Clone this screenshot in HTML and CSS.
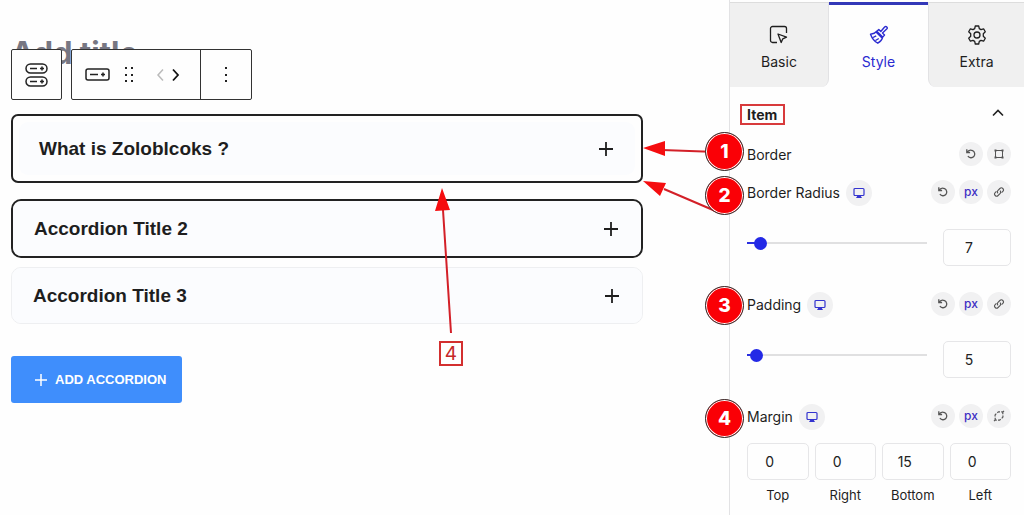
FILE: index.html
```html
<!DOCTYPE html>
<html lang="en">
<head>
<meta charset="utf-8">
<title>Accordion block editor</title>
<link rel="stylesheet" href="styles.css">
</head>
<body>
<svg class="sprite" aria-hidden="true">
  <symbol id="plus" viewBox="0 0 16 16"><path d="M8 1v14M1 8h14" fill="none" stroke="currentColor" stroke-width="1.800"/></symbol>
  <symbol id="reset" viewBox="0 0 12 12"><path d="M1.800 1.200v3.300h3.300M2 4.400c1.300-2 3.700-2.600 5.600-1.700a3.700 3.700 0 1 1-4.700 5.300" fill="none" stroke="currentColor" stroke-width="1.300"/></symbol>
  <symbol id="monitor" viewBox="0 0 12 12"><rect x="1" y="1.500" width="10" height="7" rx="1" fill="none" stroke="currentColor" stroke-width="1.200"/><path d="M4.500 8.500h3l1.500 2.500h-6z" fill="currentColor"/></symbol>
  <symbol id="link" viewBox="0 0 12 12"><path d="M5 7.300a2 2 0 0 1 0-2.900l1.900-1.900a2 2 0 0 1 2.900 2.900l-1.200 1.200M7 4.700a2 2 0 0 1 0 2.900l-1.900 1.900a2 2 0 0 1-2.900-2.900l1.200-1.200" fill="none" stroke="currentColor" stroke-width="1.100"/></symbol>
  <symbol id="unlink" viewBox="0 0 12 12"><path d="M4.300 2.700 5.500 1.800H7M8.200 1.800h1.600v2.400M9.900 5.600v1.500l-1.200 1.200M7.700 9.200 6.500 10.200H5M3.800 10.200H2.200V7.800M2.100 6.400V4.900l1.200-1.200M10 1.800l1-1M2 10.200l-1 1" fill="none" stroke="currentColor" stroke-width="1.200"/></symbol>
</svg>

<div class="app">
  <main class="editor">
    <header class="editor-head">
      <h1 class="post-title">Add title</h1>
      <div class="toolbar" role="toolbar" aria-label="Block tools">
        <div class="tool-group">
          <button class="tool tool-parent" aria-label="Select parent accordion">
            <svg width="24" height="26" viewBox="0 0 24 26" fill="none" stroke="#222" stroke-width="1.500"><rect x="1" y="2" width="21" height="9" rx="4.500"/><rect x="1" y="15" width="21" height="9" rx="4.500"/><path d="M5 6.500h7M5 19.500h7M15 6.500h4M17 4.500v4M15 19.500h4M17 17.500v4"/></svg>
          </button>
        </div>
        <div class="tool-group">
          <div class="tool-set">
            <button class="tool" aria-label="Accordion item"><svg width="26" height="14" viewBox="0 0 26 14" fill="none" stroke="#222" stroke-width="1.500"><rect x="1" y="1" width="23" height="11" rx="2"/><path d="M5 6.500h8M16 6.500h4M18 4.500v4"/></svg></button>
            <button class="tool" aria-label="Drag"><svg width="12" height="18" viewBox="0 0 12 18" fill="#222"><path d="M1 1h2v2H1zM7 1h2v2H7zM1 8h2v2H1zM7 8h2v2H7zM1 14h2v2H1zM7 14h2v2H7z"/></svg></button>
            <div class="movers">
              <button class="tool" aria-label="Move left" disabled><svg width="10" height="16" viewBox="0 0 10 16" fill="none" stroke="#bbb" stroke-width="1.500"><path d="M8 2.500 3 8l5 5.500"/></svg></button>
              <button class="tool" aria-label="Move right"><svg width="10" height="16" viewBox="0 0 10 16" fill="none" stroke="#111" stroke-width="1.800"><path d="M2 2.500 7 8l-5 5.500"/></svg></button>
            </div>
          </div>
          <button class="tool tool-more" aria-label="Options"><svg width="4" height="18" viewBox="0 0 4 18" fill="#222"><path d="M1 1h2v2H1zM1 8h2v2H1zM1 14h2v2H1z"/></svg></button>
        </div>
      </div>
    </header>

    <div class="accordion">
      <div class="item item-selected"><button class="item-title"><span>What is Zoloblcoks ?</span><svg class="plus"><use href="#plus"/></svg></button></div>
      <div class="item item-bordered"><button class="item-title"><span>Accordion Title 2</span><svg class="plus"><use href="#plus"/></svg></button></div>
      <div class="item"><button class="item-title"><span>Accordion Title 3</span><svg class="plus"><use href="#plus"/></svg></button></div>
    </div>

    <button class="add-button"><svg width="14" height="14" viewBox="0 0 14 14" fill="none" stroke="currentColor" stroke-width="1.500"><path d="M7 1v12M1 7h12"/></svg>ADD ACCORDION</button>
  </main>

  <aside class="sidebar">
    <nav class="tabs" role="tablist">
      <button class="tab tab-before" role="tab"><svg width="20" height="20" viewBox="0 0 20 20" fill="none" stroke="currentColor" stroke-width="1.300" stroke-linejoin="round"><path d="M8 17.500H3.500a2 2 0 0 1-2-2v-12a2 2 0 0 1 2-2h12a2 2 0 0 1 2 2V8M9 9l8.500 3.200-3.700 1.600-1.600 3.700z"/></svg>Basic</button>
      <button class="tab tab-active" role="tab" aria-selected="true"><svg width="20" height="20" viewBox="0 0 20 20" fill="none" stroke="currentColor" stroke-width="1.400" stroke-linejoin="round"><path d="m7.800 6.200 2-1.700 2 2 3.800-4.500c1.500-1.500 3.600.5 2.100 2.100l-4.200 4 2 2-1.800 2zM7.800 6.200C6 8.500 4 8.800 1.500 9.200c1.500 4 4 7.300 7.300 9 2.200-1.300 4.200-3.300 4.900-6.100M7 7l6.300 6.200M4 12.500l3.200-1.700M6.500 15.500l3.300-2"/></svg>Style</button>
      <button class="tab tab-after" role="tab"><svg width="20" height="20" viewBox="0 0 20 20" fill="none" stroke="currentColor" stroke-width="1.300" stroke-linejoin="round"><path d="M8.300 1h3.400l.6 2.600 1.700 1 2.600-.8 1.700 3-2 1.900v2.600l2 1.900-1.700 3-2.600-.8-1.700 1-.6 2.600H8.300l-.6-2.600-1.700-1-2.600.8-1.700-3 2-1.900V8.700l-2-1.900 1.700-3 2.600.8 1.700-1z"/><circle cx="10" cy="10" r="3"/></svg>Extra</button>
    </nav>

    <section class="panel">
      <div class="panel-head">
        <h2 class="panel-title">Item</h2>
        <button class="chevron" aria-label="Collapse"><svg width="12" height="8" viewBox="0 0 12 8" fill="none" stroke="#222" stroke-width="1.600"><path d="M1 6.500 6 1.500l5 5"/></svg></button>
      </div>

      <div class="row row-border">
        <span>Border</span>
        <div class="actions">
          <button class="round" aria-label="Reset border"><svg><use href="#reset"/></svg></button>
          <button class="round" aria-label="Edit border"><svg viewBox="0 0 12 12" fill="none" stroke="currentColor"><path d="M2.500 2.500h7v7h-7z"/><path d="M1.500 1.500h2v2h-2zM8.500 1.500h2v2h-2zM1.500 8.500h2v2h-2zM8.500 8.500h2v2h-2z" fill="currentColor" stroke="none"/></svg></button>
        </div>
      </div>

      <div class="row">
        <label for="radius">Border Radius</label>
        <button class="round device" aria-label="Device"><svg><use href="#monitor"/></svg></button>
        <div class="actions">
          <button class="round" aria-label="Reset radius"><svg><use href="#reset"/></svg></button>
          <button class="round unit">px</button>
          <button class="round" aria-label="Link sides"><svg><use href="#link"/></svg></button>
        </div>
      </div>
      <div class="slider-row">
        <div class="slider" style="--value: 7%"><input type="range" min="0" max="100" value="7" aria-label="Border radius slider"></div>
        <input class="box" id="radius" type="text" value="7">
      </div>

      <div class="row">
        <label for="padding">Padding</label>
        <button class="round device" aria-label="Device"><svg><use href="#monitor"/></svg></button>
        <div class="actions">
          <button class="round" aria-label="Reset padding"><svg><use href="#reset"/></svg></button>
          <button class="round unit">px</button>
          <button class="round" aria-label="Link sides"><svg><use href="#link"/></svg></button>
        </div>
      </div>
      <div class="slider-row">
        <div class="slider" style="--value: 5%"><input type="range" min="0" max="100" value="5" aria-label="Padding slider"></div>
        <input class="box" id="padding" type="text" value="5">
      </div>

      <div class="row">
        <span>Margin</span>
        <button class="round device" aria-label="Device"><svg><use href="#monitor"/></svg></button>
        <div class="actions">
          <button class="round" aria-label="Reset margin"><svg><use href="#reset"/></svg></button>
          <button class="round unit">px</button>
          <button class="round" aria-label="Unlink sides"><svg><use href="#unlink"/></svg></button>
        </div>
      </div>
      <div class="sides">
        <label class="side"><input class="box" type="text" value="0">Top</label>
        <label class="side"><input class="box" type="text" value="0">Right</label>
        <label class="side"><input class="box" type="text" value="15">Bottom</label>
        <label class="side"><input class="box" type="text" value="0">Left</label>
      </div>
    </section>

    <div class="notes">
      <svg class="arrows" width="300" height="200" viewBox="0 0 300 200" fill="none" stroke="#d32028" stroke-width="2" aria-hidden="true">
        <path d="M19 193 11 70M285 12 230 10M288 73 232 49"/>
        <g fill="#f50d0f" stroke="none"><path d="M10 48 3 71l15-1zM211 8l22-7v15zM211 41l23 2-6 13z"/></g>
      </svg>
      <span class="note-box">4</span>
      <span class="badge badge-1">1</span>
      <span class="badge badge-2">2</span>
      <span class="badge badge-3">3</span>
      <span class="badge badge-4">4</span>
    </div>
  </aside>
</div>
</body>
</html>
```
FILE: styles.css
```css
* { box-sizing: border-box; }
body {
  margin: 0;
  background: #fefefe;
  color: #1e1e1e;
  font: 13px/16px Inter, "Liberation Sans", sans-serif;
}
button {
  margin: 0;
  padding: 0;
  border: 0;
  background: none;
  color: inherit;
  font: inherit;
}
.sprite { position: absolute; width: 0; height: 0; }
.app { display: flex; min-height: 100vh; overflow: hidden; }

/* Editor canvas */
.editor { flex: 1; min-width: 0; padding: 36px 86px 0 11px; }
.editor-head { position: relative; height: 78px; }
.post-title {
  margin: 0;
  color: #777783;
  font-size: 31px;
  line-height: 34px;
  font-weight: 700;
}
.toolbar { position: absolute; top: 13px; left: 0; display: flex; gap: 9px; }
.tool-group {
  display: flex;
  height: 51px;
  border: 1px solid #333;
  border-radius: 2px;
  background: #fefefe;
}
.tool { display: flex; align-items: center; justify-content: center; }
.tool-parent { width: 49px; }
.tool-set {
  display: flex;
  align-items: center;
  gap: 13px;
  padding: 0 19px 0 13px;
}
.movers { display: flex; gap: 6px; margin-left: 6px; }
.tool-more { width: 51px; border-left: 1px solid #333; }

.item {
  margin-bottom: 9px;
  border: 1px solid #eeeff1;
  border-radius: 10px;
  background: #fbfcfe;
}
.item-bordered { border: 2px solid #222; }
.item-selected {
  margin-bottom: 16px;
  padding: 6px;
  border: 2px solid #222;
  border-radius: 7px;
  background: #fefefe;
}
.item-title {
  display: flex;
  align-items: center;
  justify-content: space-between;
  width: 100%;
  min-height: 55px;
  padding: 0 22px 0 21px;
  background: #fbfcfe;
  border-radius: 9px;
  font: 700 19px/24px "Liberation Sans", Arial, sans-serif;
  text-align: left;
}
.item-selected .item-title { min-height: 53px; padding: 0 21px 0 20px; }
.plus { width: 16px; height: 16px; }

.add-button {
  display: flex;
  align-items: center;
  gap: 7px;
  height: 47px;
  margin-top: 32px;
  padding: 0 16px 0 23px;
  border-radius: 3px;
  background: #3f8efc;
  color: #fff;
  font: 700 13px/16px "Liberation Sans", Arial, sans-serif;
}

/* Settings sidebar */
.sidebar {
  position: relative;
  flex: 0 0 295px;
  padding-top: 2px;
  border-left: 1px solid #e2e2e4;
}
.tabs { display: grid; grid-template-columns: 99px 99px 1fr; }
.tab {
  display: flex;
  flex-direction: column;
  align-items: center;
  gap: 8px;
  height: 85px;
  padding-top: 22px;
  border-top: 1px solid #ddd;
  background: #f0f0f0;
  font-size: 14px;
  line-height: 18px;
}
.tab-before { border-right: 1px solid #e2e2e4; border-radius: 0 0 8px 0; }
.tab-after { border-left: 1px solid #e2e2e4; border-radius: 0 0 0 8px; }
.tab-active {
  padding-top: 20px;
  border-top: 3px solid #3338b8;
  background: #fefefe;
  color: #2b2bd0;
}
.panel { padding: 17px 13px 0 17px; }
.panel-head { display: flex; align-items: center; justify-content: space-between; }
.panel-title {
  margin: 0 0 0 -7px;
  padding: 0 6px 0 5px;
  border: 2px solid #d83a3c;
  font-size: 14px;
  line-height: 17px;
  font-weight: 700;
}
.chevron { display: flex; padding: 0 7px 4px; }
.row { display: flex; align-items: center; height: 26px; font-size: 14px; }
.row-border { margin: 17px 0 12px; }
.actions { display: flex; align-self: flex-start; gap: 4px; margin-left: auto; }
.round {
  display: flex;
  align-items: center;
  justify-content: center;
  width: 24px;
  height: 24px;
  border-radius: 50%;
  background: #f1f1f2;
  color: #555;
}
.round svg { width: 12px; height: 12px; }
.device { width: 26px; height: 26px; margin-left: 6px; color: #3434cf; }
.unit { color: #3d2ec4; font-size: 12px; font-weight: 500; }
.slider-row { display: flex; gap: 16px; margin: 23px 0 26px; }
.slider {
  flex: 1;
  height: 28px;
  background:
    linear-gradient(#2a2fe0, #2a2fe0) 0 50% / var(--value) 2px no-repeat,
    linear-gradient(#e0e0e1, #e0e0e1) 0 50% / 100% 2px no-repeat;
}
.slider input {
  display: block;
  width: calc(100% + 12px);
  height: 28px;
  margin: 0 -6px;
  background: transparent;
  appearance: none;
}
.slider input::-webkit-slider-thumb {
  width: 13px;
  height: 13px;
  border-radius: 50%;
  background: #2329e6;
  appearance: none;
}
.box {
  width: 68px;
  height: 37px;
  padding: 0 16px 0 0;
  border: 1px solid #e6e6e8;
  border-radius: 5px;
  background: #fefefe;
  color: #222;
  font: 14px/18px Inter, "Liberation Sans", sans-serif;
  text-align: center;
}
.sides { display: grid; grid-template-columns: repeat(4, 1fr); gap: 6px; margin-top: 13px; }
.side { display: flex; flex-direction: column; align-items: center; gap: 7px; font-size: 13px; }
.side .box { width: 100%; }

/* Callouts drawn over the editor and the sidebar */
.notes { position: absolute; top: 0; left: 0; pointer-events: none; }
.arrows { position: absolute; top: 140px; left: -298px; overflow: visible; }
.note-box {
  position: absolute;
  top: 341px;
  left: -291px;
  width: 24px;
  height: 25px;
  border: 2px solid #d32f2f;
  color: #c62828;
  font-size: 19px;
  line-height: 21px;
  text-align: center;
}
.badge {
  position: absolute;
  left: -25px;
  width: 39px;
  height: 39px;
  border: 1px solid #333;
  border-radius: 50%;
  background: #fa0006;
  box-shadow: inset 0 0 0 1px #fff;
  color: #fff;
  font-size: 19px;
  line-height: 38px;
  font-weight: 800;
  text-align: center;
}
.badge-1 { top: 132px; }
.badge-2 { top: 176px; }
.badge-3 { top: 286px; }
.badge-4 { top: 399px; }
```
